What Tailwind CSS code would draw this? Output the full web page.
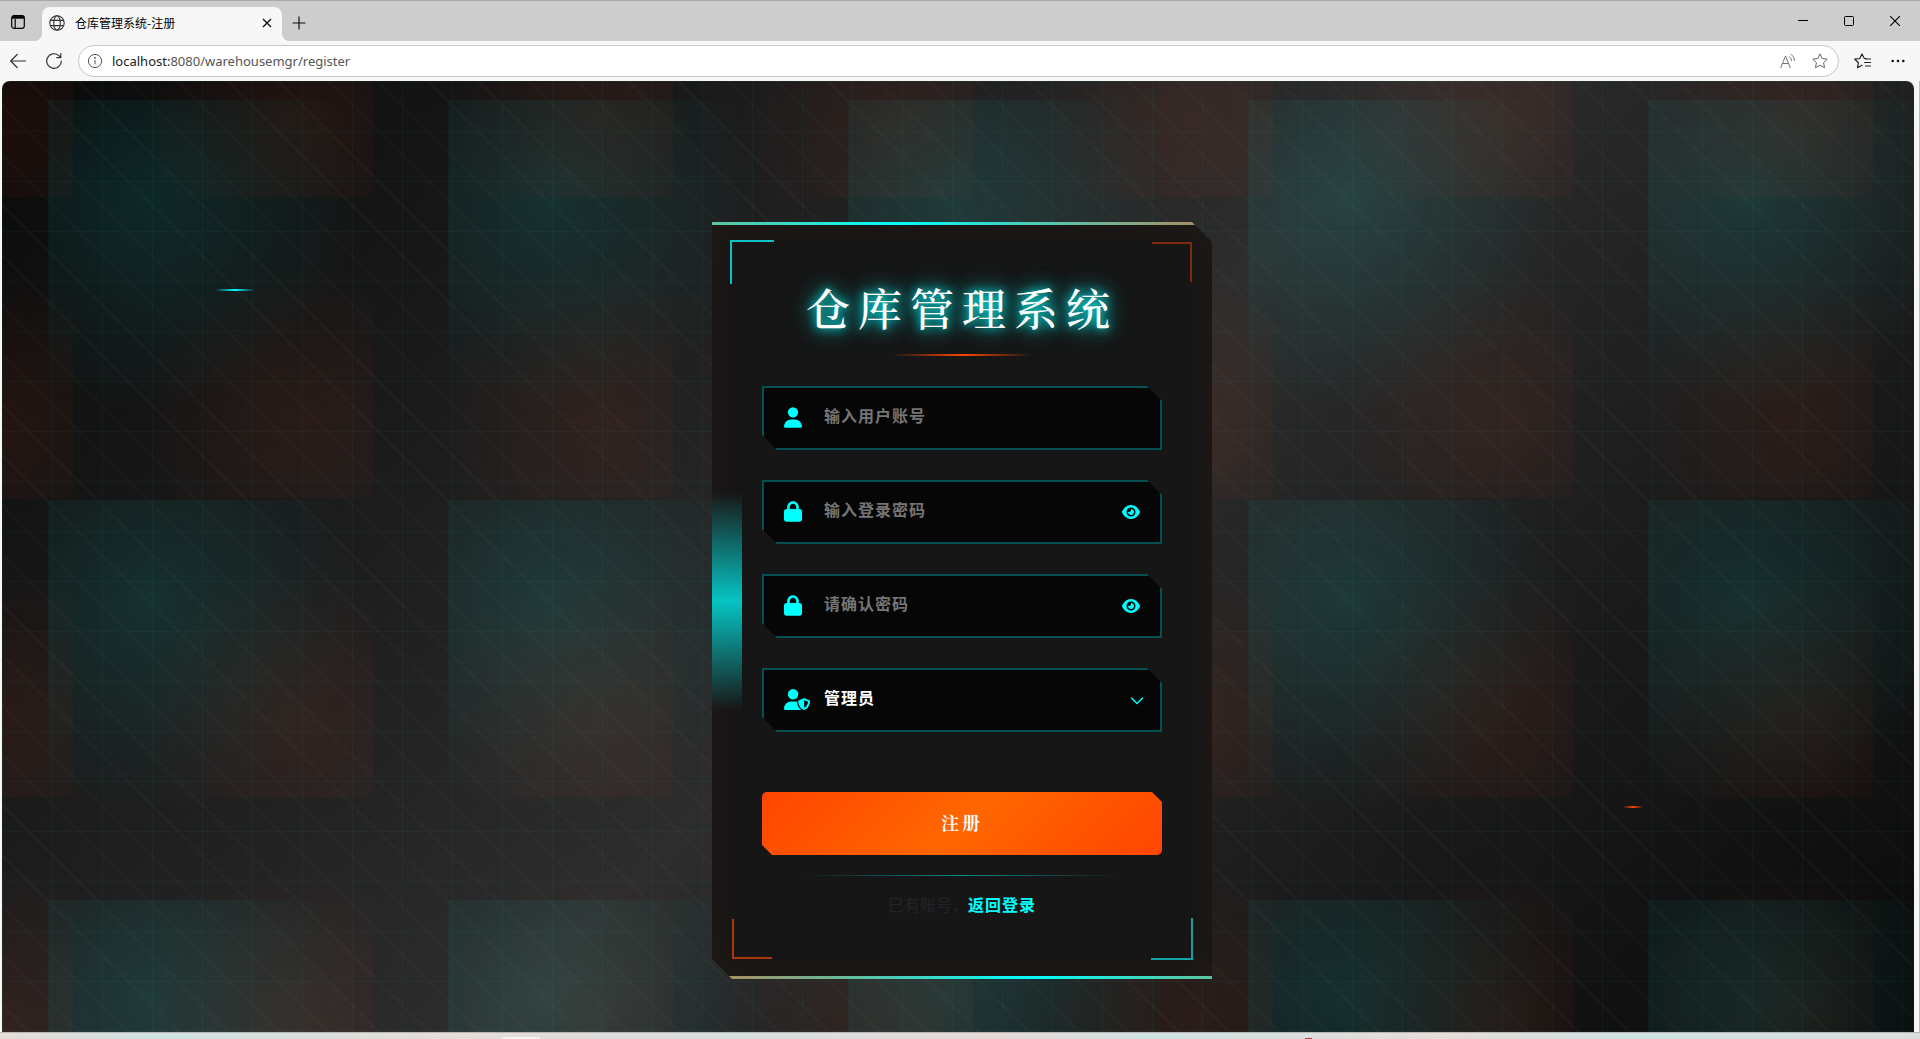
<!DOCTYPE html>
<html lang="zh-CN">
<head>
<meta charset="utf-8">
<meta name="viewport" content="width=device-width, initial-scale=1">
<title>仓库管理系统-注册</title>
<script src="https://cdn.jsdelivr.net/npm/@tailwindcss/browser@4"></script>
</head>
<body class="flex h-screen flex-col overflow-hidden bg-[#f7f7f7] font-['Noto_Sans_CJK_SC',sans-serif] text-[#212529]">

<!-- Tab strip -->
<header class="shrink-0">
  <div class="flex h-[41px] items-end justify-between border-t border-[#a8a8a8] bg-[#cdcdcd] text-black">
    <div class="flex h-[34px] items-center">
      <button aria-label="标签页操作" class="ml-[10px] mr-4 pb-3">
        <svg class="mt-2 size-4" viewBox="0 0 16 16" fill="none" stroke="#000" stroke-width="1.2"><rect x="1.7" y="1.7" width="12.6" height="12.6" rx="2.2"/><path d="M2 3.4h12" stroke-width="2.6"/><path d="M5.2 5v9"/></svg>
      </button>
      <div class="relative flex h-[34px] w-[240px] items-center rounded-t-lg bg-[#f7f7f7] pr-2 pb-[2px] pl-[7px]">
        <span class="absolute bottom-0 -left-2 size-2 bg-[radial-gradient(circle_at_0_0,#cdcdcd_8px,#f7f7f7_8px)]"></span>
        <span class="absolute -right-2 bottom-0 size-2 bg-[radial-gradient(circle_at_100%_0,#cdcdcd_8px,#f7f7f7_8px)]"></span>
        <svg class="size-4" viewBox="0 0 16 16" fill="none" stroke="#333" stroke-width="1.1"><circle cx="8" cy="8" r="7.2"/><ellipse cx="8" cy="8" rx="3.3" ry="7.2"/><path d="M1.5 5.4h13M1.5 10.6h13"/></svg>
        <span class="ml-[10px] flex-1 text-xs leading-4">仓库管理系统-注册</span>
        <button aria-label="关闭标签页"><svg class="size-[14px]" viewBox="0 0 14 14" fill="none" stroke="#111" stroke-width="1.4"><path d="M3 3l8 8M11 3l-8 8"/></svg></button>
      </div>
      <button aria-label="新建标签页" class="ml-[10px] pb-[2px]"><svg class="size-[14px]" viewBox="0 0 14 14" fill="none" stroke="#111" stroke-width="1.2"><path d="M7 .5v13M.5 7h13"/></svg></button>
    </div>
    <div class="flex h-[41px] items-center gap-9 pr-5">
      <button aria-label="最小化"><svg class="size-[10px]" viewBox="0 0 10 10" fill="none" stroke="#000"><path d="M0 4.5h10"/></svg></button>
      <button aria-label="最大化"><svg class="size-[10px]" viewBox="0 0 10 10" fill="none" stroke="#000"><rect x=".5" y=".5" width="9" height="9" rx="1"/></svg></button>
      <button aria-label="关闭"><svg class="size-[10px]" viewBox="0 0 10 10" fill="none" stroke="#000" stroke-width="1.1"><path d="M0 0l10 10M10 0L0 10"/></svg></button>
    </div>
  </div>
  <div class="flex h-10 items-center pr-[15px] pl-[10px]">
    <button aria-label="后退"><svg class="size-4" viewBox="0 0 16 16" fill="none" stroke="#333" stroke-width="1.2" stroke-linecap="round" stroke-linejoin="round"><path d="M15.5 8H.7M7.2 1.5L.7 8l6.5 6.5"/></svg></button>
    <button aria-label="刷新" class="ml-5"><svg class="size-4" viewBox="0 0 16 16" fill="none" stroke="#333" stroke-width="1.2" stroke-linecap="round" stroke-linejoin="round"><path d="M15.3 8A7.3 7.3 0 1 1 12.6 2.4L14.8 4.6M14.8.7v4h-4"/></svg></button>
    <div class="ml-4 flex h-8 flex-1 items-center rounded-full border border-[#c9c9c9] bg-white pr-[10px] pl-2">
      <svg class="size-4" viewBox="0 0 16 16" fill="none" stroke="#555"><circle cx="8" cy="8" r="6.6"/><path d="M8 7v4.3"/><circle cx="8" cy="4.9" r=".5" fill="#555"/></svg>
      <div class="ml-[9px] flex-1 font-['Noto_Sans','Open_Sans',sans-serif] text-[13px] leading-5 text-[#555]"><span class="text-[#222]">localhost:</span>8080/warehousemgr/register</div>
      <div class="flex items-center gap-4">
        <button aria-label="大声朗读"><svg class="size-4" viewBox="0 0 16 16" fill="none" stroke="#777" stroke-linecap="round"><path d="M.8 14.5L5.5 3l4.7 11.5M2.4 10.5h6.2M9.4 3.6a5 5 0 0 1 2.2 4.2M11.2 1.4a7.5 7.5 0 0 1 3.5 6.2"/></svg></button>
        <button aria-label="收藏"><svg class="size-4" viewBox="0 0 16 16" fill="none" stroke="#666" stroke-linejoin="round"><path d="M8 .9l2.2 4.6 5 .7-3.6 3.5.9 5L8 12.300l-4.500 2.400.9-5L.8 6.200l5-.7z"/></svg></button>
      </div>
    </div>
    <button aria-label="收藏夹" class="ml-[15px]"><svg class="size-[17px]" viewBox="0 0 17 17" fill="none" stroke="#222" stroke-width="1.2" stroke-linejoin="round" stroke-linecap="round"><path d="M12 5.500L10.200 5.300 8 .9 5.800 5.500.8 6.200l3.600 3.500-.9 5L8 12.300M11.500 6h5M10.500 9.500h6M11.500 13h5"/></svg></button>
    <button aria-label="更多" class="ml-5"><svg class="h-4 w-[14px]" viewBox="0 0 14 16" fill="#111"><circle cx="1.700" cy="8" r="1.300"/><circle cx="7" cy="8" r="1.300"/><circle cx="12.300" cy="8" r="1.300"/></svg></button>
  </div>
</header>

<!-- Page -->
<div class="flex min-h-0 flex-1 border-r border-[#bdbdbd] pr-[5px] pl-[2px]">
<main class="relative flex-1 overflow-hidden rounded-t-lg bg-[linear-gradient(135deg,#0a0a0a_0%,#1a1a1a_25%,#2d2d2d_50%,#1a1a1a_75%,#0a0a0a_100%)]">
  <!-- tiled glows -->
  <div class="absolute inset-0 bg-[radial-gradient(circle_at_25%_25%,rgba(0,255,255,0.1)_0%,transparent_50%),radial-gradient(circle_at_75%_75%,rgba(255,60,10,0.08)_0%,transparent_50%)] bg-[size:400px_400px,300px_300px] bg-[position:46px_19px,71px_117px]"></div>
  <!-- grid and diagonals -->
  <div class="absolute inset-0 bg-[linear-gradient(90deg,rgba(0,255,200,0.04)_1px,transparent_1px),linear-gradient(180deg,rgba(0,255,200,0.04)_1px,transparent_1px),linear-gradient(45deg,transparent_24%,rgba(255,255,255,0.03)_26%,transparent_28%,transparent_74%,rgba(255,255,255,0.03)_76%,transparent_78%)] bg-[size:50px_50px]"></div>
  <div class="absolute top-[208px] left-[213px] h-[2px] w-10 bg-[linear-gradient(90deg,transparent,#00ffff,transparent)]"></div>
  <div class="absolute top-[725px] right-[271px] h-[2px] w-5 bg-[linear-gradient(90deg,transparent,#ff4500,transparent)]"></div>

  <div class="relative flex justify-center pt-[141px] pl-2">
    <section class="relative w-[500px] bg-[#161616] px-[50px] pt-[55px] pb-[63px] shadow-[inset_0_0_50px_rgba(255,90,0,0.05)] [clip-path:polygon(0_0,calc(100%-20px)_0,100%_20px,100%_100%,20px_100%,0_calc(100%-20px))]">
      <div class="absolute inset-x-0 top-0 h-[3px] bg-[linear-gradient(90deg,#5fc39f_0%,#00ffff_37%,#b08a58_100%)]"></div>
      <div class="absolute inset-x-0 bottom-0 h-[3px] bg-[linear-gradient(270deg,#5fc39f_0%,#00ffff_37%,#b08a58_100%)]"></div>
      <div class="absolute top-[270px] left-0 h-[218px] w-[30px] bg-[linear-gradient(180deg,transparent,rgba(0,255,255,0.75),transparent)]"></div>
      <div class="absolute top-[18px] left-[18px] size-11 border-t-2 border-l-2 border-[#08c4c4]"></div>
      <div class="absolute top-5 right-5 size-10 border-t-2 border-r-2 border-[#7c2b0f]"></div>
      <div class="absolute bottom-5 left-5 size-10 border-b-2 border-l-2 border-[#a8380b]"></div>
      <div class="absolute right-[19px] bottom-[19px] size-[42px] border-r-2 border-b-2 border-[#10a3a3]"></div>

      <h1 class="text-center font-['Noto_Serif_CJK_SC','Noto_Serif_SC','Noto_Sans_CJK_SC',serif] text-[44px] leading-[60px] font-medium tracking-[8px] text-white [text-shadow:0_0_10px_rgba(0,255,255,0.9),0_0_20px_rgba(0,255,255,0.9),0_0_40px_rgba(0,255,255,0.2)]">仓库管理系统</h1>
      <div class="mx-auto mt-[17px] h-[2px] w-[140px] bg-[linear-gradient(90deg,transparent,#ff4500,transparent)]"></div>

      <form class="mt-[30px]">
        <div class="flex flex-col gap-[30px]">
          <div class="relative">
            <label for="account" class="absolute top-[21px] left-[22px] z-10" aria-label="用户账号"><svg class="h-[21px] w-[18px] fill-[#00ffff]" viewBox="0 0 448 512"><path d="M224 256A128 128 0 1 0 224 0a128 128 0 1 0 0 256zm-45.700 48C79.800 304 0 383.800 0 482.300C0 498.700 13.300 512 29.700 512l388.600 0c16.400 0 29.700-13.300 29.700-29.700C448 383.800 368.200 304 269.700 304l-91.400 0z"/></svg></label>
            <input id="account" type="text" placeholder="输入用户账号" class="block h-16 w-full border-2 border-[#055050] bg-[#060606] pb-[6px] pl-[60px] text-base font-bold tracking-[1px] text-white placeholder:text-[#757575] [clip-path:polygon(0_0,calc(100%-15px)_0,100%_15px,100%_100%,15px_100%,0_calc(100%-15px))]">
          </div>
          <div class="relative">
            <label for="password" class="absolute top-[21px] left-[22px] z-10" aria-label="登录密码"><svg class="h-[21px] w-[18px] fill-[#00ffff]" viewBox="0 0 448 512"><path d="M144 144l0 48 160 0 0-48c0-44.200-35.800-80-80-80s-80 35.800-80 80zM80 192l0-48C80 64.500 144.500 0 224 0s144 64.500 144 144l0 48 16 0c35.300 0 64 28.700 64 64l0 192c0 35.300-28.700 64-64 64L64 512c-35.300 0-64-28.700-64-64L0 256c0-35.300 28.700-64 64-64l16 0z"/></svg></label>
            <input id="password" type="password" placeholder="输入登录密码" class="block h-16 w-full border-2 border-[#055050] bg-[#060606] pb-[6px] pl-[60px] text-base font-bold tracking-[1px] text-white placeholder:text-[#757575] [clip-path:polygon(0_0,calc(100%-15px)_0,100%_15px,100%_100%,15px_100%,0_calc(100%-15px))]">
            <button type="button" aria-label="显示密码" class="absolute top-6 right-[22px]"><svg class="h-4 w-[18px] fill-[#00ffff]" viewBox="0 0 576 512"><path d="M288 32c-80.800 0-145.500 36.800-192.600 80.600C48.600 156 17.300 208 2.500 243.700c-3.300 7.900-3.300 16.700 0 24.600C17.300 304 48.600 356 95.400 399.400C142.500 443.200 207.200 480 288 480s145.500-36.800 192.600-80.600c46.800-43.500 78.100-95.400 93-131.100c3.300-7.900 3.300-16.700 0-24.600c-14.900-35.700-46.200-87.700-93-131.100C433.500 68.800 368.800 32 288 32zM144 256a144 144 0 1 1 288 0 144 144 0 1 1 -288 0zm144-64c0 35.300-28.700 64-64 64c-7.100 0-13.900-1.200-20.300-3.300c-5.500-1.800-11.900 1.600-11.700 7.400c.3 6.900 1.300 13.800 3.200 20.700c13.700 51.200 66.400 81.600 117.600 67.900s81.600-66.400 67.900-117.600c-11.100-41.500-47.800-69.400-88.600-71.100c-5.800-.2-9.200 6.100-7.400 11.700c2.100 6.400 3.300 13.200 3.300 20.300z"/></svg></button>
          </div>
          <div class="relative">
            <label for="confirm" class="absolute top-[21px] left-[22px] z-10" aria-label="确认密码"><svg class="h-[21px] w-[18px] fill-[#00ffff]" viewBox="0 0 448 512"><path d="M144 144l0 48 160 0 0-48c0-44.200-35.800-80-80-80s-80 35.800-80 80zM80 192l0-48C80 64.500 144.500 0 224 0s144 64.500 144 144l0 48 16 0c35.300 0 64 28.700 64 64l0 192c0 35.300-28.700 64-64 64L64 512c-35.300 0-64-28.700-64-64L0 256c0-35.300 28.700-64 64-64l16 0z"/></svg></label>
            <input id="confirm" type="password" placeholder="请确认密码" class="block h-16 w-full border-2 border-[#055050] bg-[#060606] pb-[6px] pl-[60px] text-base font-bold tracking-[1px] text-white placeholder:text-[#757575] [clip-path:polygon(0_0,calc(100%-15px)_0,100%_15px,100%_100%,15px_100%,0_calc(100%-15px))]">
            <button type="button" aria-label="显示密码" class="absolute top-6 right-[22px]"><svg class="h-4 w-[18px] fill-[#00ffff]" viewBox="0 0 576 512"><path d="M288 32c-80.800 0-145.500 36.800-192.600 80.600C48.600 156 17.300 208 2.500 243.700c-3.300 7.900-3.300 16.700 0 24.600C17.300 304 48.600 356 95.400 399.400C142.500 443.200 207.200 480 288 480s145.500-36.800 192.600-80.600c46.800-43.500 78.100-95.400 93-131.100c3.300-7.900 3.300-16.700 0-24.600c-14.900-35.700-46.200-87.700-93-131.100C433.500 68.800 368.800 32 288 32zM144 256a144 144 0 1 1 288 0 144 144 0 1 1 -288 0zm144-64c0 35.300-28.700 64-64 64c-7.100 0-13.900-1.200-20.300-3.300c-5.500-1.800-11.900 1.600-11.700 7.400c.3 6.900 1.300 13.800 3.200 20.700c13.700 51.200 66.400 81.600 117.600 67.900s81.600-66.400 67.900-117.600c-11.100-41.500-47.800-69.400-88.600-71.100c-5.800-.2-9.200 6.100-7.400 11.700c2.100 6.400 3.300 13.200 3.300 20.300z"/></svg></button>
          </div>
          <div class="relative">
            <label for="role" class="absolute top-[21px] left-[22px] z-10" aria-label="角色"><svg class="h-[21px] w-[26px] fill-[#00ffff]" viewBox="0 0 640 512"><path d="M224 256A128 128 0 1 0 224 0a128 128 0 1 0 0 256zm-45.700 48C79.800 304 0 383.800 0 482.300C0 498.700 13.300 512 29.700 512l388.600 0c1.800 0 3.500-.2 5.300-.5c-76.300-55.100-99.800-141-103.100-200.200c-16.100-4.800-33.100-7.300-50.700-7.300l-91.400 0zm308.800-78.300l-120 48C358 277.400 352 286.200 352 296c0 63.300 25.900 168.800 134.800 214.200c5.900 2.500 12.600 2.500 18.500 0C614.100 464.800 640 359.300 640 296c0-9.800-6-18.600-15.100-22.300l-120-48c-5.700-2.300-12.100-2.300-17.800 0zM591.400 312c-3.900 50.700-27.200 116.700-95.400 149.700l0-187.800L591.400 312z"/></svg></label>
            <select id="role" class="block h-16 w-full appearance-none border-2 border-[#055050] bg-[#060606] pb-[6px] pl-[60px] text-base font-bold tracking-[1px] text-white [clip-path:polygon(0_0,calc(100%-15px)_0,100%_15px,100%_100%,15px_100%,0_calc(100%-15px))]"><option>管理员</option></select>
            <svg class="pointer-events-none absolute top-7 right-[18px] h-[10px] w-[14px]" viewBox="0 0 14 10" fill="none" stroke="#00ffff" stroke-width="1.500" stroke-linecap="round" stroke-linejoin="round"><path d="M1.500 2L7 7.500 12.500 2"/></svg>
          </div>
        </div>
        <button type="submit" class="mt-[60px] block h-[63px] w-full rounded-[5px] bg-[linear-gradient(135deg,#ff4500,#ff6600,#ff4500)] pb-1 font-['Noto_Serif_CJK_SC','Noto_Serif_SC','Noto_Sans_CJK_SC',serif] text-lg font-bold tracking-[3px] text-white [clip-path:polygon(0_0,calc(100%-10px)_0,100%_10px,100%_100%,10px_100%,0_calc(100%-10px))]">注册</button>
      </form>
      <div class="mx-auto mt-5 h-px w-[320px] bg-[linear-gradient(90deg,transparent,rgba(0,255,255,0.5),transparent)]"></div>
      <p class="mt-4 text-center text-base leading-6">已有账号，<a href="#" class="font-bold tracking-[1px] text-[#00ffff]">返回登录</a></p>
    </section>
  </div>
</main>
</div>

<!-- Desktop strip under the window -->
<footer class="flex h-[7px] shrink-0 items-end border-t border-[#b5b5b5] bg-[linear-gradient(90deg,#e6dcd8_0%,#cfe3e3_8%,#e6dcd8_24%,#d8dfdf_38%,#dcdfdf_42%,#e6dad6_52%,#cfe3e3_60%,#e6dcd8_75%,#cfe3e3_85%,#dcdfdf_100%)]">
  <div class="ml-[502px] h-[2px] w-[38px] rounded-t bg-[#f1f4f3]"></div>
  <div class="ml-[765px] h-px w-[7px] bg-[#b83a3a]"></div>
</footer>
</body>
</html>
